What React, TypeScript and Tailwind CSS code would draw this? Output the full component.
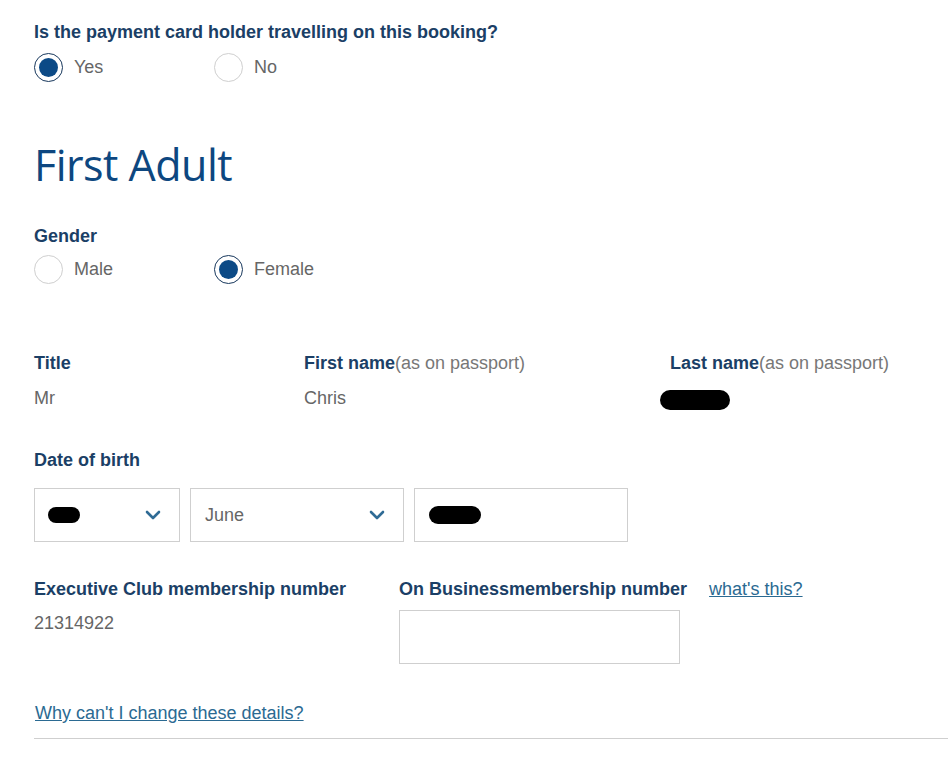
import React from 'react';

interface RadioProps {
  label: string;
  checked?: boolean;
}

function Radio({ label, checked }: RadioProps) {
  return (
    <label className="flex items-center w-[180px]">
      <span
        className={
          checked
            ? 'w-[29px] h-[29px] rounded-full border-[1.5px] border-[#17375c] flex items-center justify-center'
            : 'w-[29px] h-[29px] rounded-full border border-[#cfcfcf]'
        }
      >
        {checked && <span className="w-[19px] h-[19px] rounded-full bg-[#0c4a86]" />}
      </span>
      <span className="ml-[11px] text-[18px] text-[#666]">{label}</span>
    </label>
  );
}

function Chevron() {
  return (
    <svg width="16" height="10" viewBox="0 0 16 10" fill="none">
      <path d="M2 2l6 6 6-6" stroke="#2f6b95" strokeWidth="2.6" strokeLinecap="round" strokeLinejoin="round" />
    </svg>
  );
}

function Blob({ w, h }: { w: number; h: number }) {
  // hand-scribbled redaction in the screenshot
  return <span className="inline-block bg-black rounded-full" style={{ width: w, height: h }} />;
}

export default function App() {
  return (
    <div className="bg-white min-h-[777px] w-[948px] overflow-hidden pl-[34px] pt-[21px] font-['Liberation_Sans',Arial,sans-serif]">
      <div className="text-[18px] font-bold text-[#1b3f66] leading-[22px]">
        Is the payment card holder travelling on this booking?
      </div>
      <div className="flex mt-[10px]">
        <Radio label="Yes" checked />
        <Radio label="No" />
      </div>

      <h1 className="mt-[57px] text-[43px] leading-[52px] text-[#0d4780] font-['Open_Sans',sans-serif] tracking-[-0.5px]">
        First Adult
      </h1>

      <div className="mt-[34px] text-[18px] font-bold text-[#1b3f66] leading-[22px]">Gender</div>
      <div className="flex mt-[8px]">
        <Radio label="Male" />
        <Radio label="Female" checked />
      </div>

      <div className="flex mt-[68px]">
        <div className="w-[270px]">
          <div className="text-[18px] font-bold text-[#1b3f66] leading-[22px]">Title</div>
          <div className="mt-[13px] text-[18px] text-[#666] leading-[22px]">Mr</div>
        </div>
        <div className="w-[366px]">
          <div className="text-[18px] leading-[22px]">
            <span className="font-bold text-[#1b3f66]">First name</span>
            <span className="text-[#777]">(as on passport)</span>
          </div>
          <div className="mt-[13px] text-[18px] text-[#666] leading-[22px]">Chris</div>
        </div>
        <div>
          <div className="text-[18px] leading-[22px]">
            <span className="font-bold text-[#1b3f66]">Last name</span>
            <span className="text-[#777]">(as on passport)</span>
          </div>
          <div className="mt-[15px] -ml-[10px] h-[22px] flex items-center">
            <Blob w={70} h={20} />
          </div>
        </div>
      </div>

      <div className="mt-[38px] text-[18px] font-bold text-[#1b3f66] leading-[22px]">Date of birth</div>
      <div className="flex gap-[10px] mt-[17px]">
        <div className="w-[146px] h-[54px] border border-[#cfcfcf] flex items-center justify-between pl-[13px] pr-[18px]">
          <Blob w={32} h={16} />
          <Chevron />
        </div>
        <div className="w-[214px] h-[54px] border border-[#cfcfcf] flex items-center justify-between pl-[14px] pr-[18px]">
          <span className="text-[18px] text-[#666]">June</span>
          <Chevron />
        </div>
        <div className="w-[214px] h-[54px] border border-[#cfcfcf] flex items-center pl-[14px]">
          <Blob w={52} h={18} />
        </div>
      </div>

      <div className="flex mt-[36px]">
        <div className="w-[365px]">
          <div className="text-[18px] font-bold text-[#1b3f66] leading-[22px]">Executive Club membership number</div>
          <div className="mt-[12px] text-[18px] text-[#666] leading-[22px]">21314922</div>
        </div>
        <div>
          <div className="text-[18px] font-bold text-[#1b3f66] leading-[22px]">On Businessmembership number</div>
          <div className="mt-[10px] w-[281px] h-[54px] border border-[#cfcfcf]" />
        </div>
        <a className="ml-[22px] text-[18px] leading-[22px] text-[#2b6a92] underline">what's this?</a>
      </div>

      <a className="block mt-[38px] ml-[1px] text-[18px] leading-[22px] text-[#2b6a92] underline">
        Why can't I change these details?
      </a>
      <div className="mt-[14px] h-px bg-[#cfcfcf]" />
    </div>
  );
}
